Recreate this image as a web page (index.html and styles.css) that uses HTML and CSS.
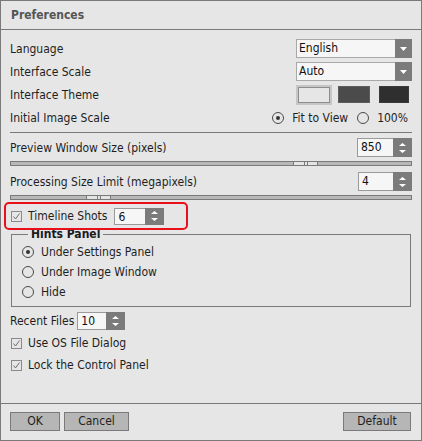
FILE: index.html
```html
<!DOCTYPE html>
<html>
<head>
<meta charset="utf-8">
<title>Preferences</title>
<link rel="stylesheet" href="styles.css">
</head>
<body>
<div class="win">
  <div class="title">Preferences</div>
  <div class="content">
    <div class="row r23">
      <span>Language</span>
      <div class="select"><span class="val">English</span><span class="drop"><svg width="7" height="4" viewBox="0 0 7 4"><polygon points="0,0 7,0 3.5,4" fill="#fff"/></svg></span></div>
    </div>
    <div class="row r23">
      <span>Interface Scale</span>
      <div class="select"><span class="val">Auto</span><span class="drop"><svg width="7" height="4" viewBox="0 0 7 4"><polygon points="0,0 7,0 3.5,4" fill="#fff"/></svg></span></div>
    </div>
    <div class="row r23">
      <span>Interface Theme</span>
      <div class="themes">
        <span class="sw sw-light"></span>
        <span class="sw sw-mid"></span>
        <span class="sw sw-dark"></span>
      </div>
    </div>
    <div class="row r23">
      <span>Initial Image Scale</span>
      <div class="radios">
        <span class="radio on"></span><span class="rlabel">Fit to View</span>
        <span class="radio"></span><span class="rlabel">100%</span>
      </div>
    </div>
    <div class="sep"></div>
    <div class="row r19 mt5">
      <span>Preview Window Size (pixels)</span>
      <div class="spin w55"><span class="val">850</span><span class="arrows"><svg width="7" height="10" viewBox="0 0 7 10"><polygon points="3.5,0 7,3 0,3" fill="#fff"/><polygon points="0,7 7,7 3.5,10" fill="#fff"/></svg></span></div>
    </div>
    <div class="slider mt4"><span class="thumb" style="left:282px"><i></i></span></div>
    <div class="row r19 mt6">
      <span>Processing Size Limit (megapixels)</span>
      <div class="spin w54"><span class="val">4</span><span class="arrows"><svg width="7" height="10" viewBox="0 0 7 10"><polygon points="3.5,0 7,3 0,3" fill="#fff"/><polygon points="0,7 7,7 3.5,10" fill="#fff"/></svg></span></div>
    </div>
    <div class="slider mt4"><span class="thumb" style="left:75px"><i></i></span></div>
    <div class="highlight">
      <span class="check"><svg width="9" height="9" viewBox="0 0 9 9"><path d="M1.5 4.5 L3.5 7 L7.5 1.5" fill="none" stroke="#6e6e6e" stroke-width="1"/></svg></span>
      <span class="clabel">Timeline Shots</span>
      <div class="spin w50 h17"><span class="val">6</span><span class="arrows"><svg width="7" height="10" viewBox="0 0 7 10"><polygon points="3.5,0 7,3 0,3" fill="#fff"/><polygon points="0,7 7,7 3.5,10" fill="#fff"/></svg></span></div>
    </div>
    <fieldset class="group">
      <legend>Hints Panel</legend>
      <div class="grow"><span class="radio on"></span><span class="rlabel">Under Settings Panel</span></div>
      <div class="grow"><span class="radio"></span><span class="rlabel">Under Image Window</span></div>
      <div class="grow"><span class="radio"></span><span class="rlabel">Hide</span></div>
    </fieldset>
    <div class="row-left mt5">
      <span>Recent Files</span>
      <div class="spin w48 h18"><span class="val">10</span><span class="arrows"><svg width="7" height="10" viewBox="0 0 7 10"><polygon points="3.5,0 7,3 0,3" fill="#fff"/><polygon points="0,7 7,7 3.5,10" fill="#fff"/></svg></span></div>
    </div>
    <div class="crow mt2">
      <span class="check"><svg width="9" height="9" viewBox="0 0 9 9"><path d="M1.5 4.5 L3.5 7 L7.5 1.5" fill="none" stroke="#6e6e6e" stroke-width="1"/></svg></span>
      <span class="clabel">Use OS File Dialog</span>
    </div>
    <div class="crow">
      <span class="check"><svg width="9" height="9" viewBox="0 0 9 9"><path d="M1.5 4.5 L3.5 7 L7.5 1.5" fill="none" stroke="#6e6e6e" stroke-width="1"/></svg></span>
      <span class="clabel">Lock the Control Panel</span>
    </div>
  </div>
  <div class="footer">
    <button class="btn b-ok">OK</button>
    <button class="btn b-cancel">Cancel</button>
    <span class="spacer"></span>
    <button class="btn b-default">Default</button>
  </div>
</div>
</body>
</html>
```
FILE: styles.css
```css
* { box-sizing: border-box; }
html, body { margin: 0; padding: 0; background: #e6e6e6; }
body {
  font-family: "DejaVu Sans Condensed", "DejaVu Sans", sans-serif;
  font-size: 12px;
  color: #1e1e1e;
}
.win {
  width: 422px;
  height: 441px;
  border: 1px solid #7a7a7a;
  display: flex;
  flex-direction: column;
  background: #e6e6e6;
}
.title {
  height: 29px;
  border-bottom: 1px solid #7a7a7a;
  padding-left: 10px;
  display: flex;
  align-items: center;
  font-weight: bold;
  color: #555;
  flex: none;
}
.content {
  flex: 1;
  padding: 7px 9px 0 9px;
  display: flex;
  flex-direction: column;
}
.row {
  display: flex;
  align-items: center;
  justify-content: space-between;
  flex: none;
}
.r23 { height: 23px; }
.r19 { height: 19px; }
.mt2 { margin-top: 2px; }
.mt4 { margin-top: 4px; }
.mt5 { margin-top: 5px; }
.mt6 { margin-top: 6px; }

.select {
  width: 116px;
  height: 19px;
  display: flex;
  border: 1px solid #a8a8a8;
  background: #f6f6f6;
}
.select .val { flex: 1; padding-left: 2px; line-height: 17px; color: #101010; }
.select .drop {
  width: 17px;
  background: #7b7b7b;
  display: flex;
  align-items: center;
  justify-content: center;
  margin: -1px -1px -1px 0;
}

.themes { display: flex; align-items: center; margin-right: 3px; }
.sw { display: block; }
.sw-light {
  width: 36px; height: 20px;
  border: 2px solid #c6c6c6;
  background: #e6e6e6;
  box-shadow: inset 0 0 0 1px #8d8d8d;
}
.sw-mid {
  width: 32px; height: 17px;
  margin-left: 6px;
  background: #4b4b4b;
  border: 1px solid #5d5d5d;
}
.sw-dark {
  width: 30px; height: 17px;
  margin-left: 9px;
  background: #2f2f2f;
  border: 1px solid #3a3a3a;
}

.radios { display: flex; align-items: center; margin-right: 4px; }
.radio {
  width: 12px; height: 12px;
  border: 1px solid #4a4a4a;
  border-radius: 50%;
  display: inline-flex;
  align-items: center;
  justify-content: center;
  flex: none;
}
.radio.on::after {
  content: "";
  width: 4px; height: 4px;
  border-radius: 50%;
  background: #333;
}
.rlabel { margin-left: 8px; }
.radios .rlabel:nth-of-type(2) { margin-right: 9px; }

.sep {
  height: 1px;
  background: #7a7a7a;
  margin-top: 3px;
  flex: none;
}

.spin {
  height: 19px;
  display: flex;
  border: 1px solid #9a9a9a;
  background: #f6f6f6;
  flex: none;
}
.spin .val { flex: 1; padding-left: 3px; line-height: 17px; color: #101010; }
.spin .arrows {
  width: 19px;
  background: #7b7b7b;
  display: flex;
  align-items: center;
  justify-content: center;
  margin: -1px -1px -1px 0;
}
.w55 { width: 55px; }
.w54 { width: 54px; }
.w50 { width: 50px; }
.w48 { width: 48px; }
.h17 { height: 17px; }
.h18 { height: 18px; }
.h17 .val, .h18 .val { line-height: 16px; }

.slider {
  position: relative;
  height: 5px;
  border: 1px solid #7a7a7a;
  background: #b8b8b8;
  flex: none;
}
.thumb {
  position: absolute;
  top: -1px;
  width: 25px;
  height: 5px;
  border: 1px solid #7a7a7a;
  background: #e4e4e4;
  display: flex;
  justify-content: center;
}
.thumb i {
  width: 4px;
  height: 3px;
  border-left: 1px solid #7a7a7a;
  border-right: 1px solid #7a7a7a;
}

.highlight {
  position: relative;
  z-index: 1;
  margin-top: 2px;
  margin-left: -6px;
  width: 184px;
  height: 28px;
  border: 2px solid #e8101a;
  border-radius: 5px;
  display: flex;
  align-items: center;
  padding-left: 5px;
  flex: none;
}
.check {
  width: 11px; height: 11px;
  border: 1px solid #8a8a8a;
  display: inline-flex;
  align-items: center;
  justify-content: center;
  flex: none;
}
.clabel { margin-left: 6px; }
.highlight .spin { margin-left: 7px; }

.group {
  margin: -3px 1px 0 1px;
  padding: 1px 0 4px 10px;
  border: 1px solid #7a7a7a;
  flex: none;
  min-width: 0;
}
.group legend {
  font-weight: bold;
  margin-left: 6px;
  padding: 0 3px;
  line-height: 14px;
  color: #1a1a1a;
}
.grow {
  height: 20px;
  display: flex;
  align-items: center;
}
.grow .rlabel { margin-left: 7px; }

.row-left {
  display: flex;
  align-items: center;
  height: 18px;
  flex: none;
}
.row-left .spin { margin-left: 3px; }
.crow {
  display: flex;
  align-items: center;
  height: 22px;
  padding-left: 1px;
  flex: none;
}

.footer {
  flex: none;
  height: 37px;
  border-top: 1px solid #7a7a7a;
  padding: 8px 9px 0 9px;
  display: flex;
  align-items: flex-start;
}
.btn {
  font-family: inherit;
  font-size: 12px;
  color: #1e1e1e;
  height: 19px;
  border: 1px solid #7a7a7a;
  background: #b6b6b6;
  padding: 0;
  margin: 0;
  line-height: 17px;
}
.b-ok { width: 50px; }
.b-cancel { width: 65px; margin-left: 4px; }
.b-default { width: 68px; margin-right: 1px; }
.spacer { flex: 1; }
```
